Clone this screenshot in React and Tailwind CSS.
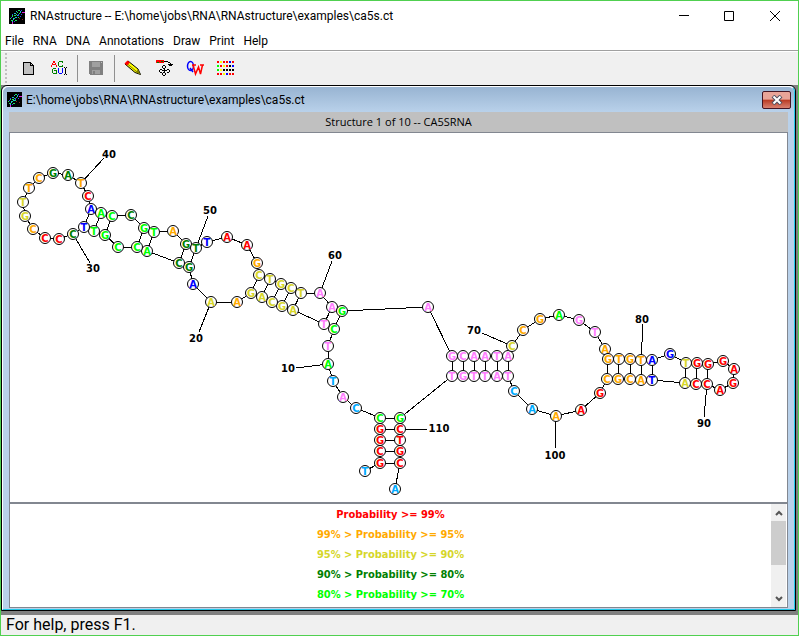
import React, { useState } from "react";

const COLORS = {
  red: "#ff0000",
  orange: "#ffaa00",
  yellow: "#d6d62a",
  green: "#008000",
  lime: "#00ff00",
  sky: "#00aaff",
  blue: "#0000ff",
  pink: "#ff80ff",
};

// base, x, y, color, in strand order
const BASES = [
  ["T", 365, 471, "sky"],
  ["G", 380, 463, "red"],
  ["C", 380, 451, "red"],
  ["G", 380, 440, "red"],
  ["G", 380, 429, "red"],
  ["C", 380, 418, "lime"],
  ["C", 356, 408, "sky"],
  ["A", 343, 397, "pink"],
  ["T", 333, 381, "sky"],
  ["A", 328, 364, "lime"],
  ["T", 328, 346, "pink"],
  ["C", 334, 329, "lime"],
  ["T", 324, 324, "pink"],
  ["A", 293, 310, "yellow"],
  ["G", 282, 306, "yellow"],
  ["C", 272, 302, "yellow"],
  ["A", 262, 297, "yellow"],
  ["G", 251, 293, "yellow"],
  ["A", 237, 302, "orange"],
  ["A", 211, 302, "yellow"],
  ["A", 193, 284, "blue"],
  ["G", 189, 267, "green"],
  ["C", 179, 263, "green"],
  ["A", 147, 251, "lime"],
  ["C", 137, 247, "lime"],
  ["C", 118, 247, "lime"],
  ["G", 105, 235, "lime"],
  ["T", 94, 231, "lime"],
  ["T", 84, 227, "blue"],
  ["C", 73, 234, "green"],
  ["C", 59, 239, "red"],
  ["C", 45, 238, "red"],
  ["C", 33, 229, "orange"],
  ["G", 25, 216, "yellow"],
  ["T", 23, 202, "yellow"],
  ["T", 29, 188, "orange"],
  ["C", 39, 178, "orange"],
  ["G", 53, 173, "green"],
  ["A", 68, 175, "green"],
  ["T", 81, 183, "orange"],
  ["C", 88, 196, "red"],
  ["A", 91, 209, "blue"],
  ["A", 101, 213, "lime"],
  ["C", 112, 216, "lime"],
  ["C", 131, 215, "green"],
  ["G", 144, 228, "lime"],
  ["T", 154, 232, "lime"],
  ["A", 173, 231, "orange"],
  ["G", 186, 244, "green"],
  ["T", 196, 248, "green"],
  ["T", 207, 242, "blue"],
  ["A", 227, 237, "red"],
  ["A", 247, 245, "red"],
  ["G", 257, 263, "orange"],
  ["C", 259, 275, "yellow"],
  ["T", 270, 279, "yellow"],
  ["G", 281, 284, "yellow"],
  ["C", 291, 288, "yellow"],
  ["T", 301, 293, "yellow"],
  ["A", 320, 293, "pink"],
  ["A", 332, 307, "pink"],
  ["G", 342, 311, "lime"],
  ["A", 428, 307, "pink"],
  ["G", 452, 356, "pink"],
  ["C", 463, 356, "pink"],
  ["A", 474, 356, "pink"],
  ["A", 485, 356, "pink"],
  ["T", 497, 356, "pink"],
  ["A", 508, 356, "pink"],
  ["C", 512, 346, "yellow"],
  ["C", 523, 330, "orange"],
  ["G", 540, 319, "orange"],
  ["A", 559, 315, "lime"],
  ["G", 579, 320, "pink"],
  ["T", 595, 332, "pink"],
  ["A", 605, 349, "orange"],
  ["G", 608, 359, "orange"],
  ["T", 619, 359, "orange"],
  ["G", 630, 359, "orange"],
  ["T", 641, 360, "orange"],
  ["A", 652, 360, "blue"],
  ["G", 670, 354, "blue"],
  ["T", 686, 363, "yellow"],
  ["G", 697, 363, "red"],
  ["G", 708, 364, "red"],
  ["G", 723, 361, "red"],
  ["A", 734, 369, "red"],
  ["G", 733, 383, "red"],
  ["A", 720, 390, "red"],
  ["C", 707, 384, "red"],
  ["C", 696, 384, "red"],
  ["A", 685, 383, "yellow"],
  ["T", 652, 380, "blue"],
  ["A", 641, 380, "orange"],
  ["C", 630, 379, "orange"],
  ["G", 618, 379, "orange"],
  ["C", 607, 379, "orange"],
  ["G", 600, 393, "red"],
  ["A", 581, 410, "red"],
  ["A", 556, 416, "orange"],
  ["A", 532, 409, "sky"],
  ["C", 514, 391, "sky"],
  ["T", 508, 376, "pink"],
  ["A", 497, 376, "pink"],
  ["T", 485, 376, "pink"],
  ["T", 474, 376, "pink"],
  ["G", 463, 376, "pink"],
  ["T", 452, 376, "pink"],
  ["G", 400, 418, "lime"],
  ["C", 400, 429, "red"],
  ["T", 400, 440, "red"],
  ["G", 400, 451, "red"],
  ["C", 400, 463, "red"],
  ["A", 395, 489, "sky"],
];

// helices as [first, last, partner of first]
const HELICES = [
  [2, 6, 113],
  [12, 13, 62],
  [14, 18, 59],
  [22, 23, 50],
  [24, 25, 47],
  [27, 29, 44],
  [64, 69, 108],
  [77, 81, 97],
  [83, 85, 92],
];

// base number, text centre x and y, leader end x and y
const LABELS = [
  [10, 288, 368, 296, 368],
  [20, 196, 338, 199, 332],
  [30, 93, 268, 90, 263],
  [40, 109, 154, 104, 158],
  [50, 210, 210, 208, 216],
  [60, 335, 255, 332, 261],
  [70, 474, 330, 482, 333],
  [80, 642, 319, 643, 324],
  [90, 704, 423, 704, 417],
  [100, 555, 455, 555, 449],
  [110, 439, 428, 427, 429],
];

const LEGEND = [
  ["Probability >= 99%", "text-[#ff0000]"],
  ["99% > Probability >= 95%", "text-[#ffaa00]"],
  ["95% > Probability >= 90%", "text-[#d6d62a]"],
  ["90% > Probability >= 80%", "text-[#008000]"],
  ["80% > Probability >= 70%", "text-[#00ff00]"],
];

const MENUS = ["File", "RNA", "DNA", "Annotations", "Draw", "Print", "Help"];

const AppIcon = ({ className }) => (
  <svg viewBox="0 0 16 16" className={className} shapeRendering="crispEdges" aria-hidden="true">
    <rect width="16" height="16" fill="#000" />
    <path d="M9 2h2v1H9zM8 4h1v1H8zM10 5h1v1h-1zM3 7h1v2H3zM5 7h2v1H5zM7 6h1v1H7zM2 12h2v1H2zM6 12h2v1H6zM1 10h1v1H1zM5 10h1v1H5zM9 9h1v1H9z" fill="#20e060" />
    <path d="M11 3h1v2h-1zM7 3h1v1H7zM5 5h2v1H5zM4 10h1v2H4zM6 9h2v1H6zM8 7h1v1H8zM3 13h1v1H3z" fill="#20b8d8" />
    <path d="M9 6h1v2H9zM5 13h1v1H5zM3 6h1v1H3zM11 8h1v1h-1zM12 6h1v1h-1zM12 2h1v1h-1zM2 9h1v1H2z" fill="#3050f0" />
    <path d="M13 4h3v1h-3zM3 14h1v2H3z" fill="#e020e0" />
    <path d="M13 11h1v1h-1zM10 10h1v1h-1z" fill="#902020" />
  </svg>
);

const NewIcon = () => (
  <svg viewBox="0 0 20 20" className="h-5 w-5" shapeRendering="crispEdges" aria-hidden="true">
    <path d="M5.5 4.5h7l3 3v9h-10z" fill="#c0c0c0" stroke="#000" />
    <path d="M12.5 4.5v3h3" fill="none" stroke="#000" />
  </svg>
);

const SequenceIcon = () => (
  <svg viewBox="0 0 20 20" className="h-5 w-5" shapeRendering="crispEdges" aria-hidden="true">
    <path d="M4 3h2v2H4zM3 5h1v2H3zM6 5h1v2H6zM3 6h4v1H3zM2 7h1v2H2zM7 7h1v2H7z" fill="#ff0000" />
    <path d="M10 3h4v1h-4zM9 4h1v4H9zM10 8h4v1h-4zM13 4h1v1h-1zM13 7h1v1h-1z" fill="#008000" />
    <path d="M4 10h3v1H4zM3 11h1v4H3zM4 15h4v1H4zM7 13h1v2H7zM5 12h3v1H5z" fill="#008000" />
    <path d="M9 10h1v5H9zM10 15h3v1h-3zM13 10h1v5h-1z" fill="#0000ff" />
    <path d="M15 9h1v1h-1zM17 9h1v1h-1zM16 10h1v6h-1zM15 16h1v1h-1zM17 16h1v1h-1z" fill="#000" />
  </svg>
);

const SaveIcon = () => (
  <svg viewBox="0 0 20 20" className="h-5 w-5" shapeRendering="crispEdges" aria-hidden="true">
    <path d="M3 3h14v14H4l-1-1z" fill="#808080" />
    <path d="M6 4h8v5H6z" fill="#a0a0a0" />
    <path d="M6 12h8v4H6z" fill="#a0a0a0" />
    <path d="M7 13h2v3H7z" fill="#808080" />
    <path d="M15 4h1v1h-1z" fill="#c0c0c0" />
  </svg>
);

const PencilIcon = () => (
  <svg viewBox="0 0 20 20" className="h-5 w-5" aria-hidden="true">
    <path d="M2 6l3-3 10 8 2.500 5.500L12 14.500z" fill="#ffff00" stroke="#000" />
    <path d="M4.500 6l9 7.500" stroke="#808000" />
    <path d="M1.500 5.500l3-3L7 4.500 4 7.500z" fill="#ff0000" />
    <path d="M12.500 14l2.500-2.500 2.500 5z" fill="#808000" />
  </svg>
);

const RefoldIcon = () => (
  <svg viewBox="0 0 20 20" className="h-5 w-5" shapeRendering="crispEdges" aria-hidden="true">
    <path d="M2 2h8v3H2z" fill="#ff0000" />
    <path d="M3 4h2v1H3zM7 3h2v1H7z" fill="#008000" />
    <path d="M10 3h4v1h-4zM14 4h2v1h-2zM16 5h1v3h-1zM14 6h5v1h-5zM15 7h3v1h-3z" fill="#000" />
    <path d="M9 7h2v1H9zM8 8h1v2H8zM11 8h1v2h-1zM9 10h2v1H9zM10 11h1v3h-1zM6 11h2v1H6zM5 12h1v2H5zM6 14h2v1H6zM8 12h5v1H8zM13 11h2v1h-2zM15 12h1v2h-1zM13 14h2v1h-2zM9 14h2v1H9zM8 15h1v2H8zM11 15h1v2h-1zM9 17h2v1H9z" fill="#000" />
  </svg>
);

const OverlapIcon = () => (
  <svg viewBox="0 0 20 20" className="h-5 w-5" fill="none" aria-hidden="true">
    <ellipse cx="5.500" cy="8" rx="3" ry="4.500" stroke="#0000ff" strokeWidth="1.500" />
    <path d="M5 10l3 4" stroke="#0000ff" strokeWidth="1.500" />
    <path d="M7 7h4M15 7h4M8 7l2.500 9 3-7 2 7L17.500 7" stroke="#ff0000" strokeWidth="1.500" />
  </svg>
);

const DOT_ROWS = [
  ["#ff0000", "#ffff00", "#ff0000", "#ff0000", "#0000ff", "#ff0000"],
  ["#00ff00", "#ff0000", "#ffff00", "#ff0000", "#000000", "#0000ff"],
  ["#00ff00", "#ffff00", "#000000", "#000000", "#000000", "#000000"],
  ["#ff0000", "#ff0000", "#ffff00", "#0000ff", "#ff0000", "#ff0000"],
];

const DotPlotIcon = () => (
  <svg viewBox="0 0 20 20" className="h-5 w-5" shapeRendering="crispEdges" aria-hidden="true">
    {DOT_ROWS.map((row, y) =>
      row.map((fill, x) => (
        <rect key={`${x}-${y}`} x={1 + x * 3} y={3 + y * 4} width="2" height="2" fill={fill} />
      ))
    )}
  </svg>
);

const ToolButton = ({ label, disabled, children }) => (
  <button
    type="button"
    aria-label={label}
    disabled={disabled}
    className="flex h-7 w-[31px] items-center justify-center"
  >
    {children}
  </button>
);

const Separator = () => <div className="mr-[2px] ml-[3px] h-[27px] w-px bg-[#909090]" />;

const Structure = () => (
  <svg
    viewBox="10 133 777 369"
    className="block w-full bg-white"
    role="img"
    aria-label="Secondary structure of CA5SRNA"
  >
    <g stroke="#000" strokeWidth="1" shapeRendering="crispEdges">
      <polyline points={BASES.map(([, x, y]) => `${x},${y}`).join(" ")} fill="none" />
      {HELICES.map(([first, last, partner]) =>
        BASES.slice(first - 1, last).map(([, x, y], i) => {
          const [, x2, y2] = BASES[partner - 1 - i];
          return <line key={first + i} x1={x} y1={y} x2={x2} y2={y2} />;
        })
      )}
      {LABELS.map(([num, , , x, y]) => (
        <line key={num} x1={BASES[num - 1][1]} y1={BASES[num - 1][2]} x2={x} y2={y} />
      ))}
    </g>
    <g fontFamily="'DejaVu Sans', sans-serif" fontWeight="700" fontSize="10" textAnchor="middle">
      {BASES.map(([base, x, y, color], i) => (
        <g key={i}>
          <circle cx={x} cy={y} r="5.5" fill="#fff" stroke="#000" />
          <text x={x} y={y + 4} fill={COLORS[color]}>
            {base}
          </text>
        </g>
      ))}
      {LABELS.map(([num, x, y]) => (
        <text key={num} x={x} y={y + 4} fill="#000">
          {num}
        </text>
      ))}
    </g>
  </svg>
);

const Legend = () => (
  <div className="flex min-h-[102px] flex-1 bg-white">
    <ul className="flex-1 pt-px text-center font-[family-name:'DejaVu_Sans_Condensed','DejaVu_Sans',sans-serif] text-[11px] leading-5 font-bold">
      {LEGEND.map(([text, color]) => (
        <li key={text} className={color}>
          {text}
        </li>
      ))}
    </ul>
    <div className="mr-px flex w-[15px] flex-col bg-[#f0f0f0]">
      <button type="button" aria-label="Scroll up" className="flex h-[17px] items-center justify-center">
        <svg viewBox="0 0 8 6" className="h-[6px] w-2" fill="none" stroke="#555" strokeWidth="2" aria-hidden="true">
          <path d="M1 5l3-3 3 3" />
        </svg>
      </button>
      <div className="h-11 bg-[#cdcdcd]" />
      <button type="button" aria-label="Scroll down" className="mt-auto flex h-[17px] items-center justify-center">
        <svg viewBox="0 0 8 6" className="h-[6px] w-2" fill="none" stroke="#555" strokeWidth="2" aria-hidden="true">
          <path d="M1 1l3 3 3-3" />
        </svg>
      </button>
    </div>
  </div>
);

const App = () => {
  const [open, setOpen] = useState(true);

  return (
    <div className="flex min-h-screen flex-col border border-[#50d050] bg-[#f0f0f0] font-[family-name:Roboto,'Open_Sans',sans-serif] text-xs text-black">
      {/* Title bar */}
      <header className="flex h-[30px] items-center bg-white pl-2">
        <AppIcon className="h-4 w-4" />
        <h1 className="ml-[5px] flex-1 whitespace-nowrap">
          RNAstructure -- E:\home\jobs\RNA\RNAstructure\examples\ca5s.ct
        </h1>
        <button type="button" aria-label="Minimize" className="flex h-7 w-[45px] items-center justify-center">
          <svg viewBox="0 0 10 10" className="h-[10px] w-[10px]" stroke="#000" aria-hidden="true">
            <path d="M0 4.500h10" />
          </svg>
        </button>
        <button type="button" aria-label="Maximize" className="flex h-7 w-[45px] items-center justify-center">
          <svg viewBox="0 0 10 10" className="h-[10px] w-[10px]" fill="none" stroke="#000" aria-hidden="true">
            <path d="M.5.5h9v9h-9z" />
          </svg>
        </button>
        <button type="button" aria-label="Close" className="flex h-7 w-[47px] items-center justify-center">
          <svg viewBox="0 0 10 10" className="h-[10px] w-[10px]" stroke="#000" aria-hidden="true">
            <path d="M0 0l10 10M10 0L0 10" />
          </svg>
        </button>
      </header>

      {/* Menu bar */}
      <nav className="flex h-5 items-center gap-[9px] border-b border-[#a0a0a0] bg-white pl-1">
        {MENUS.map((menu) => (
          <button key={menu} type="button">
            {menu}
          </button>
        ))}
      </nav>

      {/* Toolbar */}
      <div className="flex h-[34px] items-center border-t border-white pb-px pl-1">
        <div className="mr-[5px] h-[30px] border-l-2 border-dotted border-[#c0c0c0]" />
        <ToolButton label="New sequence">
          <NewIcon />
        </ToolButton>
        <ToolButton label="Open sequence">
          <SequenceIcon />
        </ToolButton>
        <Separator />
        <ToolButton label="Save" disabled>
          <SaveIcon />
        </ToolButton>
        <Separator />
        <ToolButton label="Draw">
          <PencilIcon />
        </ToolButton>
        <ToolButton label="Fold">
          <RefoldIcon />
        </ToolButton>
        <ToolButton label="OligoWalk">
          <OverlapIcon />
        </ToolButton>
        <ToolButton label="Dot plot">
          <DotPlotIcon />
        </ToolButton>
      </div>

      {/* Workspace */}
      <main className="flex flex-1 flex-col bg-[#808080] pr-[2px] pb-1">
        {open && (
          <section className="flex flex-1 flex-col rounded-t-md border border-black bg-[#b9d1ea]">
            <div className="flex flex-1 flex-col rounded-t-md border-t border-r border-b border-l border-t-white border-r-[#20c8e8] border-b-[#20c8e8] border-l-white">
              <div className="flex h-[25px] items-center rounded-t-md bg-linear-to-b from-[#98b4d2] to-[#b9d1ea] pr-[3px] pl-1">
                <AppIcon className="h-[15px] w-[15px]" />
                <h2 className="ml-1 flex-1">E:\home\jobs\RNA\RNAstructure\examples\ca5s.ct</h2>
                <button
                  type="button"
                  aria-label="Close structure"
                  onClick={() => setOpen(false)}
                  className="flex h-[18px] w-[29px] items-center justify-center rounded-xs border border-[#431422] bg-linear-to-b from-[#e8a498] from-45% via-[#b83820] via-50% to-[#d88070]"
                >
                  <svg viewBox="0 0 12 10" className="h-[10px] w-3" fill="none" aria-hidden="true">
                    <path d="M2 1l8 8M10 1L2 9" stroke="#505060" strokeWidth="4" />
                    <path d="M2.500 1.500l7 7M9.500 1.500l-7 7" stroke="#fff" strokeWidth="2" />
                  </svg>
                </button>
              </div>
              <div className="mr-[6px] mb-px ml-[6px] flex flex-1 flex-col">
                <div className="h-5 bg-[#c0c0c0] text-center font-[family-name:'Open_Sans',sans-serif] text-[11px] leading-5">
                  Structure 1 of 10 -- CA5SRNA
                </div>
                <div className="flex flex-1 flex-col border border-[#828790]">
                  <Structure />
                  <div className="h-[2px] bg-[#828790]" />
                  <Legend />
                </div>
              </div>
            </div>
          </section>
        )}
      </main>

      {/* Status bar */}
      <footer className="h-5 pl-[5px] text-base leading-5">For help, press F1.</footer>
    </div>
  );
};

export default App;
